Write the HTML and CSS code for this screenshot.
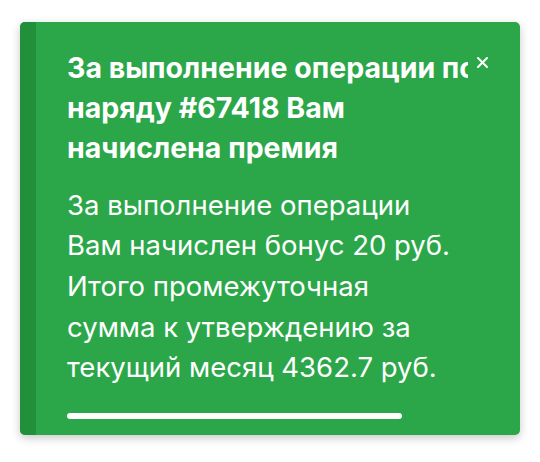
FILE: index.html
```html
<!DOCTYPE html>
<html lang="ru">
<head>
<meta charset="utf-8">
<link rel="stylesheet" href="styles.css">
</head>
<body>
<div class="toast">
  <div class="toast-strip"></div>
  <div class="toast-main">
    <button class="toast-close" type="button" aria-label="Закрыть">
      <svg class="toast-close-icon" viewBox="0 0 11 11" width="11" height="11"><path d="M1 1 L10 10 M10 1 L1 10" stroke="#ffffff" stroke-width="2" stroke-linecap="round" fill="none"/></svg>
    </button>
    <div class="toast-title">За выполнение операции по<br>наряду #67418 Вам<br>начислена премия</div>
    <div class="toast-body">За выполнение операции<br>Вам начислен бонус 20 руб.<br>Итого промежуточная<br>сумма к утверждению за<br>текущий месяц 4362.7 руб.</div>
    <div class="toast-progress"><div class="toast-progress-bar" style="width: 335px"></div></div>
  </div>
</div>
</body>
</html>
```
FILE: styles.css
```css
html, body {
  margin: 0;
  padding: 0;
  background: #ffffff;
}
body {
  padding: 22px 20px;
  font-family: Inter, "Noto Sans", sans-serif;
}
.toast {
  width: 500px;
  display: flex;
  background: #2ba74a;
  border-radius: 5px;
  overflow: hidden;
  box-shadow: 0 3px 10px rgba(0, 0, 0, 0.22);
  color: #ffffff;
}
.toast-strip {
  width: 16px;
  flex: none;
  background: #228f3a;
}
.toast-main {
  position: relative;
  flex: 1;
  min-width: 0;
  padding: 25.5px 20px 16px 31px;
}
.toast-close {
  position: absolute;
  top: 28px;
  left: 432px;
  width: 40px;
  height: 40px;
  padding: 7px 0 0 9px;
  border: none;
  background: #2ba74a;
  display: flex;
  align-items: flex-start;
  justify-content: flex-start;
  cursor: pointer;
}
.toast-close-icon {
  display: block;
}
.toast-title {
  font-size: 28.5px;
  font-weight: 700;
  line-height: 40px;
  white-space: nowrap;
}
.toast-body {
  margin-top: 17px;
  font-size: 27.5px;
  line-height: 40.7px;
}
.toast-progress {
  margin-top: 25px;
}
.toast-progress-bar {
  height: 6px;
  border-radius: 3px;
  background: #ffffff;
}
```
